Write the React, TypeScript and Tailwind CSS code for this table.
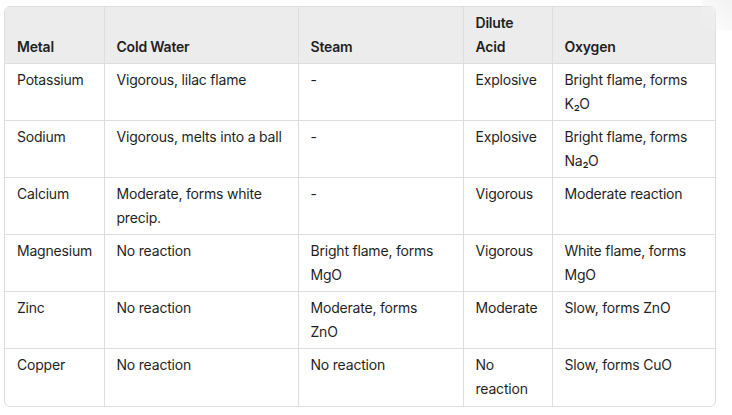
import React from 'react'

const headers = ['Metal', 'Cold Water', 'Steam', 'Dilute Acid', 'Oxygen']

// line breaks kept as in the original layout
const rows = [
  ['Potassium', 'Vigorous, lilac flame', '-', 'Explosive', 'Bright flame, forms\nK₂O'],
  ['Sodium', 'Vigorous, melts into a ball', '-', 'Explosive', 'Bright flame, forms\nNa₂O'],
  ['Calcium', 'Moderate, forms white\nprecip.', '-', 'Vigorous', 'Moderate reaction'],
  ['Magnesium', 'No reaction', 'Bright flame, forms\nMgO', 'Vigorous', 'White flame, forms\nMgO'],
  ['Zinc', 'No reaction', 'Moderate, forms\nZnO', 'Moderate', 'Slow, forms ZnO'],
  ['Copper', 'No reaction', 'No reaction', 'No\nreaction', 'Slow, forms CuO'],
]

const widths = ['w-[99px]', 'w-[194px]', 'w-[165px]', 'w-[89px]', 'w-[165px]']

function App() {
  return (
    <div className="relative h-[415px] w-[732px] bg-white font-['Inter',sans-serif] text-[14px] leading-6 tracking-[-0.2px] text-[#1f1f1f]">
      <div className="pointer-events-none absolute top-0 right-0 h-[30px] w-[30px] rounded-bl-xl bg-gradient-to-bl from-[#f2f2f2] to-transparent" />
      <div className="pt-[6px] pl-[4px]">
        <div className="w-[712px] overflow-hidden rounded-md border border-[#dedede]">
          <table className="w-full table-fixed border-collapse">
            <colgroup>
              {widths.map((w) => (
                <col key={w} className={w} />
              ))}
            </colgroup>
            <thead>
              <tr className="h-[56px] bg-[#ececec]">
                {headers.map((h, i) => (
                  <th
                    key={h}
                    className={`${
                      i > 0 ? 'border-l border-[#dedede]' : ''
                    } px-3 pt-[4px] pb-[4px] text-left align-bottom font-semibold`}
                  >
                    {h}
                  </th>
                ))}
              </tr>
            </thead>
            <tbody>
              {rows.map((row) => (
                <tr key={row[0]} className="h-[57px] border-t border-[#dedede]">
                  {row.map((cell, i) => (
                    <td
                      key={i}
                      className={`${
                        i > 0 ? 'border-l border-[#dedede]' : ''
                      } px-3 pt-[4px] pb-[4px] align-top whitespace-pre-line`}
                    >
                      {cell}
                    </td>
                  ))}
                </tr>
              ))}
            </tbody>
          </table>
        </div>
      </div>
    </div>
  )
}

export default App
